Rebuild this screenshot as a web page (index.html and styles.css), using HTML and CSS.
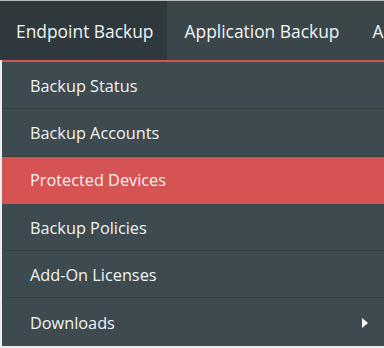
FILE: index.html
```html
<!DOCTYPE html>
<html>
    <head>
        <link rel="stylesheet" href="styles.css">
    </head>
    <body>
        <div class="topnav">
            <div class="tab active">Endpoint Backup</div>
            <div class="tab">Application Backup</div>
            <div class="tab">Account</div>
        </div>
        <div class="dropdown">
            <div class="item">Backup Status</div>
            <div class="item">Backup Accounts</div>
            <div class="item selected">Protected Devices</div>
            <div class="item">Backup Policies</div>
            <div class="item">Add-On Licenses</div>
            <div class="item">
                Downloads
                <span class="caret"></span>
            </div>
        </div>
    </body>
</html>
```
FILE: styles.css
```css
* {
    font-family: 'Open Sans', sans-serif;
    box-sizing: border-box;
}

body {
    margin: 0;
    background: #eceeef;
    border-top: 1px solid #b9bcbd;
    overflow: hidden;
}

.topnav {
    display: flex;
    height: 59px;
    background: #3b464b;
    white-space: nowrap;
    overflow: hidden;
}

.tab {
    display: flex;
    align-items: center;
    padding: 0 15px 0 18px;
    color: #f2f4f4;
    font-size: 17.4px;
    flex-shrink: 0;
}

.tab.active {
    background: #30393d;
    padding: 0 13px 0 16px;
}

.dropdown {
    margin-left: 2px;
    border-top: 2px solid #d65353;
    background: #3d4a4f;
    display: flex;
    flex-direction: column;
}

.item {
    height: 47.3px;
    display: flex;
    align-items: center;
    justify-content: space-between;
    padding: 1px 16px 0 28px;
    color: #f2f4f4;
    font-size: 16.3px;
    border-bottom: 1px solid #36413f;
}

.item:last-child {
    border-bottom: none;
}

.item.selected {
    background: #d65353;
    border-bottom-color: #d65353;
}

.caret {
    width: 0;
    height: 0;
    border-top: 5px solid transparent;
    border-bottom: 5px solid transparent;
    border-left: 6px solid #ffffff;
}
```
